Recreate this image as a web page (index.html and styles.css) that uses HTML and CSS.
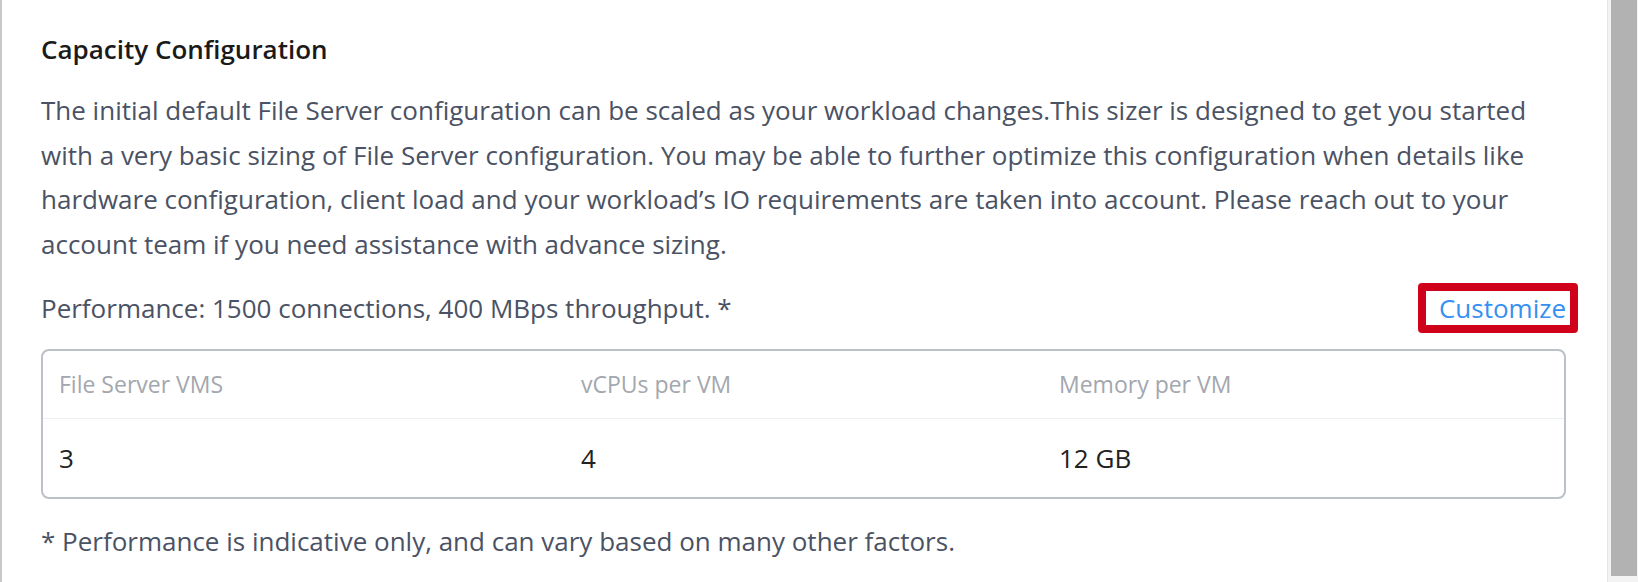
FILE: index.html
```html
<!DOCTYPE html>
<html lang="en">
<head>
    <meta charset="UTF-8">
    <meta name="viewport" content="width=device-width, initial-scale=1.0">
    <title>Capacity Configuration</title>
    <link rel="stylesheet" href="styles.css">
</head>
<body>

<div class="page">
    <div class="panel">
        <h2 class="section-title">Capacity Configuration</h2>
        <p class="intro">The initial default File Server configuration can be scaled as your workload changes.This sizer is designed to get you started with a very basic sizing of File Server configuration. You may be able to further optimize this configuration when details like hardware configuration, client load and your workload’s IO requirements are taken into account. Please reach out to your account team if you need assistance with advance sizing.</p>

        <div class="perf-row">
            <span class="perf-text">Performance: 1500 connections, 400 MBps throughput. *</span>
            <a class="customize" href="#">Customize<span class="highlight"></span></a>
        </div>

        <div class="config-table">
            <div class="config-head">File Server VMS</div>
            <div class="config-head">vCPUs per VM</div>
            <div class="config-head">Memory per VM</div>
            <div class="config-cell">3</div>
            <div class="config-cell">4</div>
            <div class="config-cell">12 GB</div>
        </div>

        <p class="footnote">* Performance is indicative only, and can vary based on many other factors.</p>
    </div>
    <div class="scrollbar">
        <div class="scroll-thumb"></div>
    </div>
</div>

</body>
</html>
```

FILE: styles.css
```css
html, body {
    margin: 0;
    height: 582px;
    overflow: hidden;
    background-color: white;
}
body {
    font-family: "Open Sans", "Liberation Sans", sans-serif;
    color: #4a5264;
}
.page {
    display: flex;
    height: 582px;
}
.panel {
    flex: 1;
    border-left: 2px solid #c9c9c9;
    padding: 34px 41px 0 39px;
}
.section-title {
    margin: 0;
    font-size: 26px;
    line-height: 30px;
    font-weight: 600;
    color: #1a1a1a;
}
.intro {
    margin: 24px 0 0 0;
    font-size: 26px;
    line-height: 44.5px;
}
.perf-row {
    display: flex;
    justify-content: space-between;
    align-items: center;
    height: 50px;
    margin-top: 17px;
    font-size: 26px;
}
.perf-text {
    line-height: 44px;
}
.customize {
    position: relative;
    line-height: 34px;
    color: #3690f2;
    text-decoration: none;
}
.highlight {
    position: absolute;
    top: -8px;
    bottom: -8px;
    left: -21px;
    right: -12px;
    border: 8px solid #d0021b;
    border-radius: 4px;
}
.config-table {
    display: grid;
    grid-template-columns: 521px 479px 1fr;
    margin-top: 16px;
    border: 2px solid #bcc0c8;
    border-radius: 8px;
}
.config-head {
    height: 67px;
    line-height: 67px;
    padding-left: 16px;
    font-size: 23px;
    font-weight: 500;
    color: #a3a7ae;
    border-bottom: 1px solid #eceef1;
}
.config-head:nth-child(3n+2), .config-cell:nth-child(3n+2) {
    padding-left: 17px;
}
.config-cell {
    height: 78px;
    line-height: 78px;
    padding-left: 16px;
    font-size: 26px;
    color: #222;
}
.footnote {
    margin: 20px 0 0 0;
    font-size: 26px;
    line-height: 44.5px;
}
.scrollbar {
    width: 31px;
    background-color: #f3f3f3;
    border-left: 1px solid #e6e6e6;
    box-sizing: border-box;
    padding: 0 1px 0 3px;
}
.scroll-thumb {
    height: 576px;
    background-color: #b2b2b2;
}
```
